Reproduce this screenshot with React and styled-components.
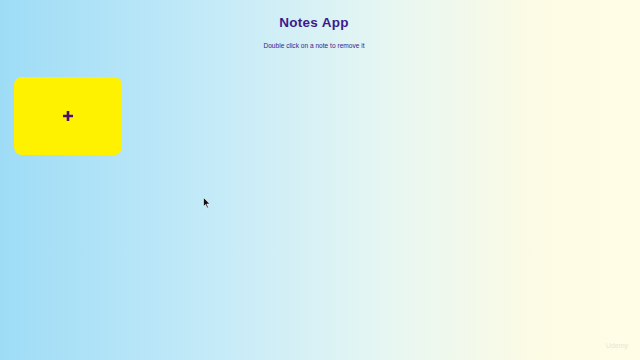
import React from 'react';
import styled, { createGlobalStyle } from 'styled-components';

const GlobalStyle = createGlobalStyle`
  html, body {
    margin: 0;
    padding: 0;
  }
  body {
    font-family: "Liberation Sans", "DejaVu Sans", sans-serif;
  }
`;

const Page = styled.div`
  position: relative;
  width: 640px;
  height: 360px;
  overflow: hidden;
  background: linear-gradient(to right, #9edcf6 0%, #c6ebf8 35%, #e6f6f2 60%, #fdfbe4 85%, #fffde6 100%);
  display: flex;
  flex-direction: column;
`;

const Header = styled.header`
  display: flex;
  flex-direction: column;
  align-items: center;
  padding: 15px 12px 0 0;
`;

const Title = styled.h1`
  margin: 0;
  font-size: 13.5px;
  font-weight: bold;
  color: #3d1a8c;
  letter-spacing: 0.3px;
`;

const Subtitle = styled.p`
  margin: 12px 0 0;
  font-size: 6.6px;
  color: #3d1a8c;
`;

const Notes = styled.div`
  display: flex;
  gap: 14px;
  padding: 28px 0 0 14px;
`;

const AddButton = styled.button`
  width: 108px;
  height: 78px;
  border: none;
  border-radius: 8px;
  background: #fff200;
  display: flex;
  align-items: center;
  justify-content: center;
  padding: 0;
  cursor: pointer;
`;

const Cursor = styled.svg`
  position: absolute;
  left: 203px;
  top: 197px;
`;

const Watermark = styled.span`
  position: absolute;
  right: 12px;
  bottom: 11px;
  font-size: 7px;
  color: #e8e6d2;
`;

export default function App() {
  return (
    <>
      <GlobalStyle />
      <Page>
        <Header>
          <Title>Notes App</Title>
          <Subtitle>Double click on a note to remove it</Subtitle>
        </Header>
        <Notes>
          <AddButton>
            <svg width="12" height="12" viewBox="0 0 12 12">
              <path d="M6 1v10M1 6h10" stroke="#45106e" strokeWidth="2.6" />
            </svg>
          </AddButton>
        </Notes>
        <Cursor width="8" height="12" viewBox="0 0 8 12">
          <path d="M0.5 0.5v9l2-2 1.6 3.5 1.3-0.6-1.6-3.4h3z" fill="#111" stroke="#fff" strokeWidth="0.6" />
        </Cursor>
        <Watermark>Udemy</Watermark>
      </Page>
    </>
  );
}
